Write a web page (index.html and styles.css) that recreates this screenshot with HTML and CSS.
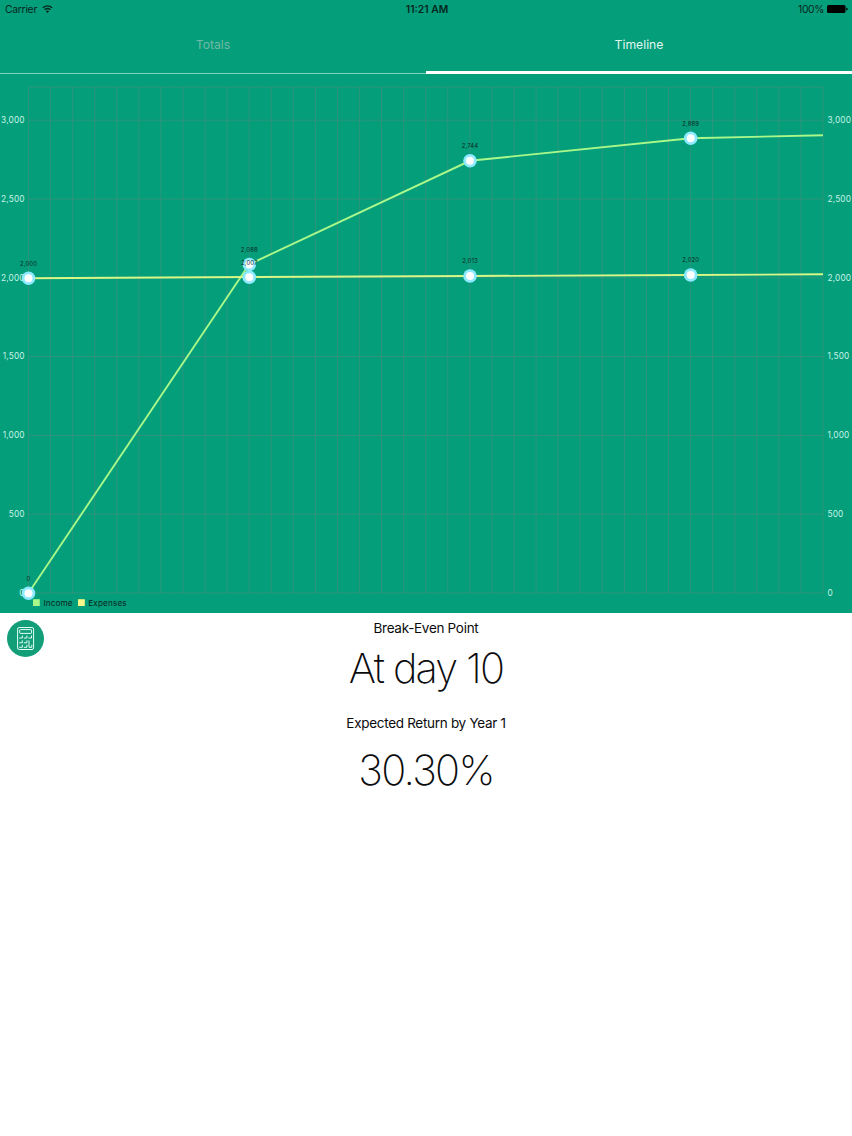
FILE: index.html
```html
<!DOCTYPE html>
<html lang="en">
<head>
<meta charset="utf-8">
<title>Timeline</title>
<link rel="stylesheet" href="styles.css">
</head>
<body>
<div class="top">
  <header class="status">
    <div class="status-left"><span>Carrier</span>
      <svg class="wifi" viewBox="0 0 11 8"><path d="M.8 2.8Q5.5-1.2 10.2 2.8M2.6 4.8Q5.5 2.2 8.4 4.8"/><path class="solid" d="M3.9 6.2Q5.5 5 7.1 6.2L5.5 7.9Z"/></svg>
    </div>
    <div class="clock">11:21 AM</div>
    <div class="status-right"><span>100%</span>
      <svg class="battery" viewBox="0 0 21 8"><rect width="18.5" height="8" rx="1.6"/><path d="M19.2 2.5Q20.8 3 20.8 4T19.2 5.5Z"/></svg>
    </div>
  </header>
  <nav class="tabs">
    <a class="tab">Totals</a>
    <a class="tab active">Timeline</a>
  </nav>
  <svg class="chart" viewBox="0 74 852 539">
    <defs>
      <g id="dot"><circle r="6.8" fill="#8ceaff"/><circle r="4" fill="#fff"/></g>
    </defs>
    <g id="grid" class="grid"></g>
    <g id="axis" class="axis"></g>
    <path class="line income" d="M28.5 593L249.3 264.3L470 160.8L690.7 138.2L823 135.3"/>
    <path class="line expenses" d="M28.5 278.2L249.3 277L470 276L690.7 275L823 274.3"/>
    <g>
      <use href="#dot" x="28.5" y="593.2"/><use href="#dot" x="249.3" y="264.5"/>
      <use href="#dot" x="470" y="160.8"/><use href="#dot" x="690.7" y="138.2"/>
      <use href="#dot" x="28.5" y="278.2"/><use href="#dot" x="249.3" y="277.2"/>
      <use href="#dot" x="470" y="276"/><use href="#dot" x="690.7" y="275"/>
    </g>
    <g class="value">
      <text x="28.5" y="580.5">0</text><text x="249.3" y="251.7">2,088</text>
      <text x="470" y="148.2">2,744</text><text x="690.7" y="125.6">2,889</text>
      <text x="28.5" y="265.8">2,000</text><text x="249.3" y="264.7">2,007</text>
      <text x="470" y="263.3">2,013</text><text x="690.7" y="262.3">2,020</text>
    </g>
    <g class="legend">
      <rect x="33" y="599.2" width="6.8" height="6.8" fill="#a8f88a"/><text x="43.5" y="605.7" textLength="29">Income</text>
      <rect x="78" y="599.2" width="6.8" height="6.8" fill="#f6f78a"/><text x="88.3" y="605.7" textLength="38.3">Expenses</text>
    </g>
  </svg>
</div>
<main class="results">
  <button class="calc" aria-label="Calculator">
    <svg viewBox="0 0 37 37"><rect x="10.6" y="7.5" width="16" height="22" rx="1.6"/><rect x="12.7" y="9.6" width="11.8" height="3.8" rx=".6"/><path d="M12.2 18H15.3V15.5M16.8 18H19.9V15.5M21.4 18H24.5V15.5M12.2 22.8H15.3V20.3M16.8 22.8H19.9V20.3M12.2 27.3H15.3V24.8M16.8 27.3H19.9V24.8M22 20.4V27.3H24.8V24.8"/></svg>
  </button>
  <h2 class="caption">Break-Even Point</h2>
  <p class="figure day">At day 10</p>
  <h2 class="caption second">Expected Return by Year 1</h2>
  <p class="figure percent">30.30%</p>
</main>
<script src="chart.js"></script>
</body>
</html>
```
FILE: styles.css
```css
* { box-sizing: border-box; }
body { margin: 0; background: #fff; color: #0b0b0d; font-family: Inter, "Liberation Sans", sans-serif; }
.top { height: 613px; background: #059e7a; }
.status { display: grid; grid-template-columns: 1fr 1fr 1fr; align-items: center; height: 18px; padding: 0 4px 0 5px; font-size: 10.3px; line-height: 18px; color: #06261e; }
.status-left, .status-right { display: flex; align-items: center; gap: 5px; }
.status-left { letter-spacing: -.25px; }
.status-right { justify-content: flex-end; gap: 3px; letter-spacing: -.35px; }
.clock { text-align: center; font-weight: 600; padding-left: 1px; }
.wifi { width: 11px; height: 8px; fill: none; stroke: #06261e; stroke-width: 1.3; }
.wifi .solid { fill: #06261e; stroke: none; }
.battery { width: 21px; height: 8px; fill: #000; }
.tabs { display: grid; grid-template-columns: 1fr 1fr; height: 56px; }
.tab { display: flex; justify-content: center; padding-top: 18px; font-size: 12.2px; line-height: 17px; color: #71b9a5; border-bottom: 1px solid #7fd3be; }
.tab.active { color: #e0f7f0; border-bottom: 3px solid #fff; }
.chart { display: block; width: 852px; height: 539px; }
.grid { fill: none; stroke: #808080; stroke-width: .8; opacity: .4; }
.line { fill: none; stroke-width: 1.9; }
.income { stroke: #a8f88a; }
.expenses { stroke: #d8f786; }
.axis { font-size: 8.3px; letter-spacing: .15px; fill: #c6f3e6; }
.axis .left { text-anchor: end; }
.value { font-size: 5.9px; letter-spacing: .15px; text-anchor: middle; fill: #06261e; }
.legend { font-size: 8.1px; fill: #06261e; }
.results { position: relative; display: flex; flex-direction: column; align-items: center; padding-top: 5px; }
.calc { position: absolute; left: 7px; top: 7px; width: 37px; height: 37px; padding: 0; border: 0; border-radius: 50%; background: #139e7a; }
.calc svg { display: block; fill: none; stroke: #e3fff6; stroke-width: 1; }
.caption { margin: 0; font-size: 13.5px; font-weight: 400; line-height: 20px; letter-spacing: -.3px; }
.second { margin-top: 20px; }
.figure { margin: 0; font-size: 41.5px; font-weight: 200; line-height: 50px; white-space: nowrap; }
.day { margin-top: 5px; letter-spacing: -1.85px; }
.percent { margin-top: 12px; letter-spacing: -1.7px; }
```
FILE: chart.js
```js
const NS = 'http://www.w3.org/2000/svg';
const left = 28.5, right = 823, top0 = 87, bottom = 593, step = 78.8;
let d = `M${left} ${top0}H${right}`;
for (let i = 0; i <= 36; i++) d += `M${(left + (right - left) * i / 36).toFixed(2)} ${top0}V${bottom}`;
const axis = document.getElementById('axis');
for (let i = 0; i <= 6; i++) {
  const y = bottom - i * step;
  d += `M${left} ${y}H${right}`;
  for (const [x, name] of [[24.7, 'left'], [827.5, 'right']]) {
    const t = document.createElementNS(NS, 'text');
    t.setAttribute('x', x);
    t.setAttribute('y', y + 2.7);
    t.setAttribute('class', name);
    t.textContent = (i * 500).toLocaleString('en-US');
    axis.append(t);
  }
}
const grid = document.createElementNS(NS, 'path');
grid.setAttribute('d', d);
document.getElementById('grid').append(grid);
```
